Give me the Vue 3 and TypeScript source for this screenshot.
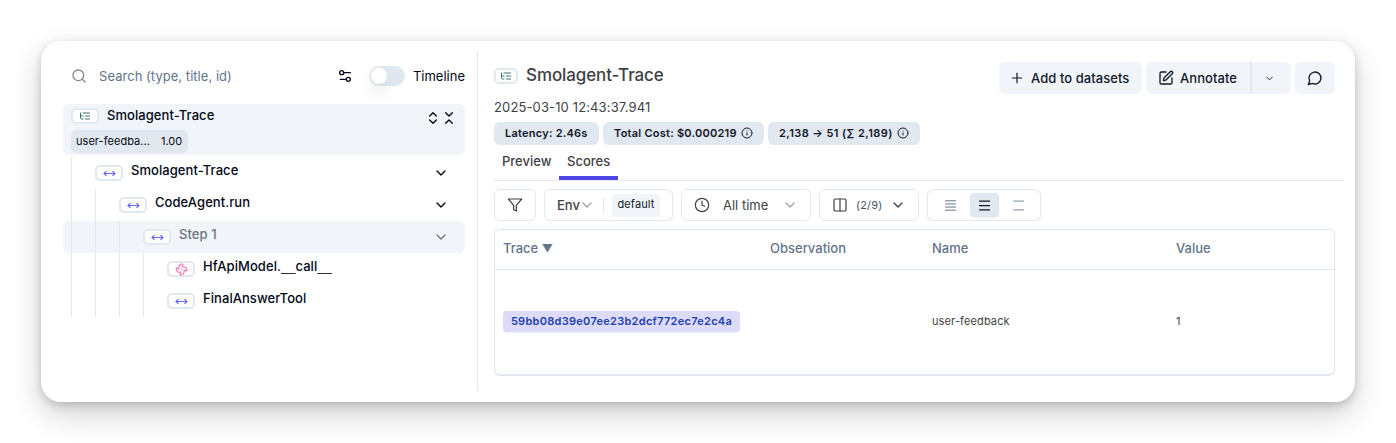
<script setup lang="ts">
import { h } from 'vue'

const icons: Record<string, string[]> = {
  search: ['M19 11a8 8 0 1 1-16 0a8 8 0 0 1 16 0', 'm21 21-4.3-4.3'],
  settings: ['M20 7h-9', 'M14 17H5', 'M20 17a3 3 0 1 1-6 0a3 3 0 0 1 6 0', 'M10 7a3 3 0 1 1-6 0a3 3 0 0 1 6 0'],
  expand: ['m7 15 5 5 5-5', 'm7 9 5-5 5 5'],
  collapse: ['m7 20 5-5 5 5', 'm7 4 5 5 5-5'],
  tree: ['M21 12h-8', 'M21 6H8', 'M21 18h-8', 'M3 6v4c0 1.1.9 2 2 2h3', 'M3 10v6c0 1.1.9 2 2 2h3'],
  span: ['m18 8 4 4-4 4', 'M2 12h20', 'm6 8-4 4 4 4'],
  generation: [
    'M10.827 16.379a6.082 6.082 0 0 1-8.618-7.002l5.412 1.45a6.082 6.082 0 0 1 7.002-8.618l-1.45 5.412a6.082 6.082 0 0 1 8.618 7.002l-5.412-1.45a6.082 6.082 0 0 1-7.002 8.618l1.45-5.412Z',
    'M12 12v.01',
  ],
  chevron: ['m6 9 6 6 6-6'],
  plus: ['M5 12h14', 'M12 5v14'],
  edit: [
    'M12 3H5a2 2 0 0 0-2 2v14a2 2 0 0 0 2 2h14a2 2 0 0 0 2-2v-7',
    'M18.375 2.625a1 1 0 0 1 3 3l-9.013 9.014a2 2 0 0 1-.853.505l-2.873.84a.5.5 0 0 1-.62-.62l.84-2.873a2 2 0 0 1 .506-.852z',
  ],
  message: ['M7.9 20A9 9 0 1 0 4 16.1L2 22Z'],
  info: ['M22 12a10 10 0 1 1-20 0a10 10 0 0 1 20 0', 'M12 16v-4', 'M12 8h.01'],
  filter: ['M22 3H2l8 9.46V19l4 2v-8.54L22 3z'],
  clock: ['M22 12a10 10 0 1 1-20 0a10 10 0 0 1 20 0', 'M12 6v6l4 2'],
  columns: ['M5 3h14a2 2 0 0 1 2 2v14a2 2 0 0 1-2 2H5a2 2 0 0 1-2-2V5a2 2 0 0 1 2-2z', 'M12 3v18'],
  small: ['M4 4.5h16', 'M4 9.5h16', 'M4 14.5h16', 'M4 19.5h16'],
  medium: ['M4 5h16', 'M4 12h16', 'M4 19h16'],
  large: ['M4 5h16', 'M4 19h16'],
}

const Icon = (props: { name: string; size: number; stroke?: number }) =>
  h(
    'svg',
    {
      width: props.size,
      height: props.size,
      viewBox: '0 0 24 24',
      fill: 'none',
      stroke: 'currentColor',
      'stroke-width': props.stroke ?? 2,
      'stroke-linecap': 'round',
      'stroke-linejoin': 'round',
    },
    icons[props.name].map((d) => h('path', { d })),
  )
Icon.props = ['name', 'size', 'stroke']

interface Node {
  name: string
  depth: number
  icon: string
  open: boolean
  active?: boolean
}

const nodes: Node[] = [
  { name: 'Smolagent-Trace', depth: 1, icon: 'span', open: true },
  { name: 'CodeAgent.run', depth: 2, icon: 'span', open: true },
  { name: 'Step 1', depth: 3, icon: 'span', open: true, active: true },
  { name: 'HfApiModel.__call__', depth: 4, icon: 'generation', open: false },
  { name: 'FinalAnswerTool', depth: 4, icon: 'span', open: false },
]

// Splits a name so that runs of underscores can be set in a wider face.
const parts = (name: string) => name.split(/(_+)/).filter(Boolean)
</script>

<template>
  <div class="page">
    <main class="card">
      <aside class="side">
        <div class="search">
          <Icon class="search-icon" name="search" :size="16" />
          <span class="placeholder">Search (type, title, id)</span>
          <Icon class="settings" name="settings" :size="16" />
          <span class="switch"><i></i></span>
          <span class="timeline">Timeline</span>
        </div>

        <div class="root">
          <div class="root-line">
            <span class="type tree"><Icon name="tree" :size="12" /></span>
            <span class="name">Smolagent-Trace</span>
            <span class="toggles">
              <Icon name="expand" :size="16" />
              <Icon name="collapse" :size="16" />
            </span>
          </div>
          <div class="score"><span>user-feedba...</span><span>1.00</span></div>
        </div>

        <div v-for="(n, i) in nodes" :key="i" class="node" :class="{ active: n.active }">
          <i v-for="g in n.depth" :key="g" class="guide"></i>
          <span class="type" :class="n.icon"><Icon :name="n.icon" :size="13" /></span>
          <span class="name"><span v-for="(p, k) in parts(n.name)" :key="k" :class="{ under: p[0] === '_' }">{{ p }}</span></span>
          <Icon v-if="n.open" class="open" name="chevron" :size="16" />
        </div>
      </aside>

      <section class="detail">
        <header class="head">
          <span class="type tree title-type"><Icon name="tree" :size="12" /></span>
          <h1>Smolagent-Trace</h1>
          <div class="actions">
            <button class="btn add"><Icon name="plus" :size="16" :stroke="1.8" />Add to datasets</button>
            <div class="split">
              <button class="btn annotate"><Icon name="edit" :size="16" />Annotate</button>
              <button class="btn more"><Icon name="chevron" :size="11" /></button>
            </div>
            <button class="btn comment"><Icon name="message" :size="16" /></button>
          </div>
        </header>

        <div class="date">2025-03-10 12:43:37.941</div>

        <div class="badges">
          <span class="badge b1">Latency: 2.46s</span>
          <span class="badge b2">Total Cost: $0.000219<Icon name="info" :size="12" /></span>
          <span class="badge b3">2,138 → 51 (∑ 2,189)<Icon name="info" :size="12" /></span>
        </div>

        <nav class="tabs">
          <span class="tab preview">Preview</span>
          <span class="tab current">Scores</span>
        </nav>

        <div class="toolbar">
          <div class="box filter"><Icon name="filter" :size="16" :stroke="1.8" /></div>
          <div class="box env">
            <span class="env-label">Env</span>
            <Icon class="muted env-arrow" name="chevron" :size="16" />
            <i class="sep"></i>
            <span class="chip">default</span>
          </div>
          <div class="box time">
            <Icon name="clock" :size="16" :stroke="1.8" />
            <span class="all">All time</span>
            <Icon class="muted end" name="chevron" :size="16" />
          </div>
          <div class="box cols">
            <Icon name="columns" :size="16" :stroke="1.8" />
            <span class="count">(2/9)</span>
            <Icon class="end" name="chevron" :size="16" />
          </div>
          <div class="box density">
            <span class="dens"><Icon name="small" :size="15" :stroke="1.6" /></span>
            <span class="dens on"><Icon name="medium" :size="15" /></span>
            <span class="dens pale"><Icon name="large" :size="15" :stroke="1.8" /></span>
          </div>
        </div>

        <div class="table">
          <div class="tr th">
            <span>Trace <span class="sort">▼</span></span><span>Observation</span><span>Name</span><span>Value</span>
          </div>
          <div class="tr td">
            <span><b class="link">59bb08d39e07ee23b2dcf772ec7e2c4a</b></span>
            <span></span>
            <span class="cell">user-feedback</span>
            <span class="cell">1</span>
          </div>
        </div>
      </section>
    </main>
  </div>
</template>

<style>
body {
  background: #fff;
}
</style>

<style scoped>
* {
  box-sizing: border-box;
}
.page {
  height: 443px;
  padding: 41px;
  overflow: hidden;
  font-family: Inter, 'Liberation Sans', sans-serif;
  font-size: 13px;
  line-height: 18px;
  color: #020817;
  white-space: nowrap;
}
svg {
  flex: none;
  display: block;
}
.card {
  display: flex;
  width: 1314px;
  height: 361px;
  border-radius: 20px;
  background: #fff;
  box-shadow: 0 12px 30px rgba(0, 0, 0, 0.19), 0 3px 8px rgba(0, 0, 0, 0.17);
}
.side {
  width: 437px;
  height: 339px;
  margin-top: 11px;
  padding: 8px 12px 0 22px;
  border-right: 1px solid #e2e8f0;
}
.search {
  display: flex;
  align-items: center;
  height: 32px;
  margin-bottom: 12px;
  padding-left: 8px;
}
.search-icon {
  color: #84878d;
}
.placeholder {
  margin-left: 12px;
  color: #64748b;
  letter-spacing: 0.04px;
}
.settings {
  margin-left: auto;
}
.switch {
  width: 36px;
  height: 20px;
  margin: 0 8px 0 16px;
  padding: 2px;
  border-radius: 10px;
  background: #e2e8f0;
}
.switch i {
  display: block;
  width: 16px;
  height: 16px;
  border-radius: 50%;
  background: #fff;
  box-shadow: 0 9px 14px rgba(0, 0, 0, 0.08);
}
.timeline {
  margin-bottom: 1px;
}
.root {
  height: 51px;
  margin-bottom: 2px;
  padding: 3px 8px 0;
  border-radius: 6px;
  background: #f1f5f9;
}
.root-line {
  display: flex;
  align-items: center;
  height: 18px;
}
.type {
  display: flex;
  flex: none;
  align-items: center;
  justify-content: center;
  width: 28px;
  height: 16px;
  margin-right: 8px;
  border: 2px solid #e2e8f0;
  border-radius: 5px;
  background: #fff;
  color: #6366f1;
}
.tree {
  color: #39796a;
}
.generation {
  color: #f472b6;
}
.name {
  font-weight: 500;
  letter-spacing: 0.06px;
}
.root-line .name {
  margin-bottom: 2px;
}
.under {
  font-family: 'Liberation Sans', sans-serif;
  letter-spacing: 0;
}
.toggles {
  display: flex;
  margin: 4px 0 0 auto;
}
.score {
  display: flex;
  align-items: center;
  gap: 11px;
  width: 117px;
  height: 23px;
  margin-top: 5px;
  padding: 0 0 2px 5px;
  border-radius: 5px;
  background: #e2e8f0;
  font-size: 11px;
  letter-spacing: 0.04px;
}
.node {
  display: flex;
  align-items: center;
  height: 32px;
  padding: 0 16px 0 8px;
  border-radius: 6px;
}
.node .name {
  margin-bottom: 6px;
}
.node.active {
  background: #f1f5f9;
}
.active .name,
.active .open {
  color: #6b7280;
}
.guide {
  width: 24px;
  height: 32px;
  border-left: 1px solid #e2e8f0;
}
.open {
  margin-left: auto;
}
.detail {
  width: 877px;
  padding: 21px 20px 0 16px;
  color: #3f3f46;
}
.head {
  display: flex;
  height: 32px;
}
.title-type {
  width: 24px;
  margin-top: 6px;
}
h1 {
  margin: 3px 0 0;
  font-size: 17px;
  line-height: 20px;
  font-weight: 500;
  letter-spacing: -0.1px;
}
.actions {
  display: flex;
  gap: 4px;
  margin-left: auto;
}
.btn {
  display: flex;
  align-items: center;
  height: 32px;
  padding: 0;
  border: 0;
  border-radius: 6px;
  background: #f1f5f9;
  color: #0f172a;
  font: 500 13px/18px Inter, 'Liberation Sans', sans-serif;
  letter-spacing: 0.06px;
}
.add {
  gap: 6px;
  width: 143px;
  padding-left: 10px;
}
.split {
  display: flex;
}
.annotate {
  gap: 6px;
  width: 104px;
  padding-left: 12px;
  border-radius: 6px 0 0 6px;
}
.more {
  justify-content: center;
  width: 41px;
  padding-right: 4px;
  border-left: 2px solid #e2e8f0;
  border-radius: 0 6px 6px 0;
}
.comment {
  justify-content: center;
  width: 40px;
}
.date {
  margin-top: 4px;
  letter-spacing: 0.13px;
}
.badges {
  display: flex;
  gap: 4px;
  margin-top: 6px;
}
.badge {
  display: flex;
  align-items: center;
  gap: 4px;
  height: 23px;
  padding: 0 0 1px 11px;
  border-radius: 6px;
  background: #e2e8f0;
  color: #0f172a;
  font-size: 11px;
  font-weight: 600;
  letter-spacing: 0.24px;
}
.b1 {
  width: 105px;
}
.b2 {
  width: 161px;
}
.b3 {
  width: 152px;
  letter-spacing: 0.42px;
}
.tabs {
  display: flex;
  height: 36px;
  margin-right: -9px;
  border-bottom: 1px solid #e2e8f0;
  font-weight: 500;
}
.tab {
  height: 35px;
  padding: 7px 8px 0;
}
.preview {
  width: 65px;
}
.current {
  width: 59px;
  border-bottom: 4px solid #4f46e5;
}
.toolbar {
  display: flex;
  gap: 8px;
  margin-top: 8px;
}
.box {
  display: flex;
  align-items: center;
  height: 32px;
  border: 1px solid #e2e8f0;
  border-radius: 6px;
}
.filter {
  justify-content: center;
  width: 42px;
}
.env {
  width: 129px;
  padding-left: 12px;
}
.env-label {
  margin-bottom: 1px;
  font-weight: 500;
}
.env-arrow {
  margin-left: -1px;
}
.muted {
  color: #a1a1aa;
}
.sep {
  width: 1px;
  height: 16px;
  margin: 0 8px 0 auto;
  background: #e2e8f0;
}
.chip {
  width: 48px;
  height: 23px;
  margin-right: 12px;
  border-radius: 4px;
  background: #f1f5f9;
  color: #0f172a;
  font-size: 11px;
  line-height: 21px;
  letter-spacing: 0.15px;
  text-align: center;
}
.time {
  width: 130px;
  padding: 0 12px;
}
.all {
  margin: 0 0 1px 13px;
}
.end {
  margin-left: auto;
}
.cols {
  width: 100px;
  padding: 0 12px;
}
.count {
  margin: 0 0 1px 8px;
  color: #475569;
  font-size: 11px;
  letter-spacing: 0.2px;
}
.density {
  width: 114px;
  padding-left: 8px;
  gap: 5px;
}
.dens {
  display: flex;
  align-items: center;
  justify-content: center;
  width: 29px;
  height: 24px;
  border-radius: 4px;
  color: #64748b;
}
.on {
  background: #e2e8f0;
  color: #0f172a;
  box-shadow: 0 1px 2px rgba(0, 0, 0, 0.06);
}
.pale {
  color: #94a3b8;
}
.table {
  height: 147px;
  margin-top: 8px;
  border: 1px solid #e2e8f0;
  border-bottom-width: 2px;
  border-radius: 6px;
}
.tr {
  display: grid;
  grid-template-columns: 267px 162px 244px 1fr;
  align-items: center;
  padding-left: 8px;
}
.th {
  height: 40px;
  padding-bottom: 3px;
  border-bottom: 1px solid #e2e8f0;
  color: #64748b;
  font-weight: 500;
}
.sort {
  font-size: 11px;
  line-height: 1;
  vertical-align: 1px;
}
.td {
  height: 103px;
  font-size: 11px;
}
.cell {
  margin-bottom: 2px;
  letter-spacing: 0.12px;
}
.link {
  display: inline-block;
  width: 237px;
  height: 21px;
  border-radius: 4px;
  background: #dddbfa;
  box-shadow: 0 1px 2px rgba(0, 0, 0, 0.06);
  color: #1e40af;
  font-weight: 600;
  letter-spacing: 0.28px;
  line-height: 21px;
  text-align: center;
}
</style>
